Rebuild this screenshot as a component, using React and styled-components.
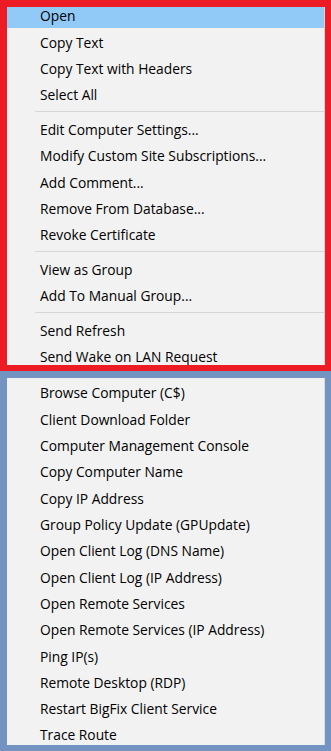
import styled, { createGlobalStyle } from "styled-components";

const GlobalStyle = createGlobalStyle`
  html, body {
    margin: 0;
    padding: 0;
    background: #ffffff;
  }
  body {
    width: 331px;
    height: 751px;
    overflow: hidden;
  }
`;

const Page = styled.div`
  display: flex;
  flex-direction: column;
  width: 331px;
`;

const Frame = styled.div`
  box-sizing: border-box;
  height: ${(p) => p.$height}px;
  border-style: solid;
  border-color: ${(p) => p.$color};
  border-width: 7px 6px ${(p) => p.$bottom}px 7px;
`;

const MenuBox = styled.div`
  height: 100%;
  background: #f2f2f2;
  border-right: 1px solid #dcdcdc;
  box-sizing: border-box;
  overflow: hidden;
`;

const List = styled.ul`
  list-style: none;
  margin: ${(p) => p.$offset}px 0 0;
  padding: 0;
  display: flex;
  flex-direction: column;
`;

const Item = styled.li`
  height: 26.35px;
  display: flex;
  align-items: center;
  padding-left: 33px;
  padding-top: 2px;
  box-sizing: border-box;
  font-family: "Open Sans", "Noto Sans", sans-serif;
  font-size: 13.8px;
  line-height: 14px;
  color: #000000;
  white-space: nowrap;
  background: ${(p) => (p.$active ? "#91c9f7" : "transparent")};

  &:last-child {
    height: auto;
    padding-top: 7px;
  }
`;

const Separator = styled.li`
  height: 8.3px;
  display: flex;
  align-items: center;
  padding-left: 28px;

  &::after {
    content: "";
    flex: 1;
    height: 1px;
    background: #d7d7d7;
  }
`;

const topMenu = [
  ["Open", "Copy Text", "Copy Text with Headers", "Select All"],
  [
    "Edit Computer Settings...",
    "Modify Custom Site Subscriptions...",
    "Add Comment...",
    "Remove From Database...",
    "Revoke Certificate",
  ],
  ["View as Group", "Add To Manual Group..."],
  ["Send Refresh", "Send Wake on LAN Request"],
];

const toolsMenu = [
  "Browse Computer (C$)",
  "Client Download Folder",
  "Computer Management Console",
  "Copy Computer Name",
  "Copy IP Address",
  "Group Policy Update (GPUpdate)",
  "Open Client Log (DNS Name)",
  "Open Client Log (IP Address)",
  "Open Remote Services",
  "Open Remote Services (IP Address)",
  "Ping IP(s)",
  "Remote Desktop (RDP)",
  "Restart BigFix Client Service",
  "Trace Route",
];

export default function App() {
  return (
    <>
      <GlobalStyle />
      <Page>
        <Frame $color="#ed1c24" $height={371} $bottom={6}>
          <MenuBox>
            <List $offset={-5}>
              {topMenu.map((group, gi) => [
                gi > 0 && <Separator key={`sep-${gi}`} />,
                ...group.map((label) => (
                  <Item key={label} $active={label === "Open"}>
                    {label}
                  </Item>
                )),
              ])}
            </List>
          </MenuBox>
        </Frame>
        <Frame $color="#7393c3" $height={380} $bottom={6}>
          <MenuBox>
            <List $offset={1}>
              {toolsMenu.map((label) => (
                <Item key={label}>{label}</Item>
              ))}
            </List>
          </MenuBox>
        </Frame>
      </Page>
    </>
  );
}
